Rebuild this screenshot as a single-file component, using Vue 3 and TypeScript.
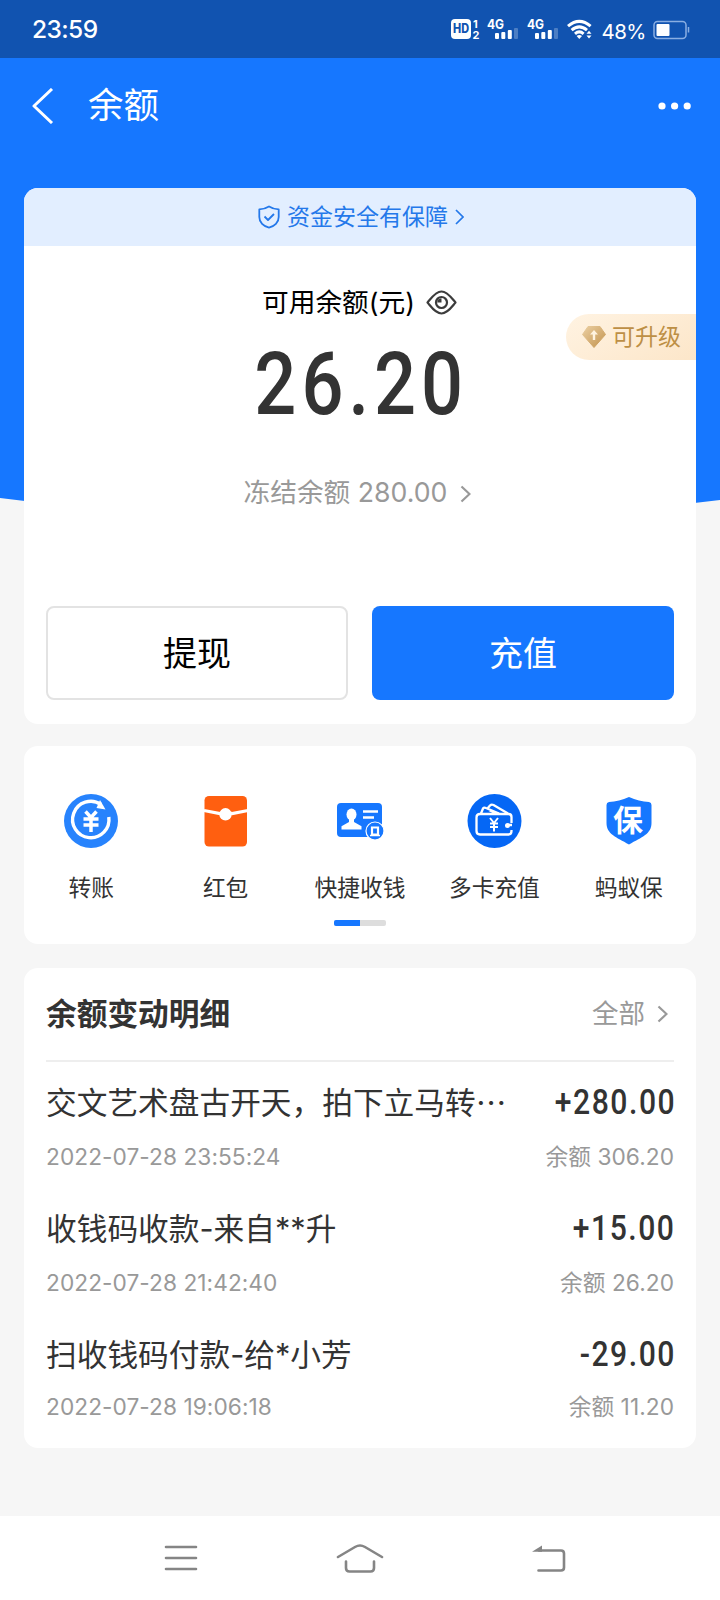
<script setup lang="ts">
interface Shortcut {
  id: string
  label: string
}

interface Transaction {
  title: string
  truncated: boolean
  time: string
  amount: string
  balance: string
}

const shortcuts: Shortcut[] = [
  { id: 'transfer', label: '转账' },
  { id: 'packet', label: '红包' },
  { id: 'collect', label: '快捷收钱' },
  { id: 'cards', label: '多卡充值' },
  { id: 'insure', label: '蚂蚁保' },
]

const transactions: Transaction[] = [
  { title: '交文艺术盘古开天，拍下立马转', truncated: true, time: '2022-07-28 23:55:24', amount: '+280.00', balance: '306.20' },
  { title: '收钱码收款-来自**升', truncated: false, time: '2022-07-28 21:42:40', amount: '+15.00', balance: '26.20' },
  { title: '扫收钱码付款-给*小芳', truncated: false, time: '2022-07-28 19:06:18', amount: '-29.00', balance: '11.20' },
]
</script>

<template>
  <div class="page">
    <svg class="backdrop" width="720" height="510" viewBox="0 0 720 510">
      <path d="M0 0H720V500Q360 545 0 498Z" fill="#1677ff" />
    </svg>

    <div class="status">
      <span class="clock">23:59</span>
      <div class="indicators">
        <svg width="142" height="24" viewBox="452 17 142 24">
          <rect x="452" y="19" width="20" height="20" rx="4" fill="#fff" />
          <text x="462" y="33.4" class="hd" textLength="16" lengthAdjust="spacingAndGlyphs">HD</text>
          <text x="474" y="27.500" class="sim">1</text>
          <text x="473.5" y="39" class="sim">2</text>
          <g v-for="dx in [0, 40]" :key="dx" :transform="`translate(${dx} 0)`" fill="#fff">
            <text x="488" y="28.8" class="net" textLength="17" lengthAdjust="spacingAndGlyphs">4G</text>
            <rect x="496" y="33" width="4" height="6" rx="1" />
            <rect x="502.3" y="32" width="4" height="7" rx="1" />
            <rect x="508.8" y="30" width="4" height="9" rx="1" />
            <rect x="515" y="28" width="4" height="11" rx="1" opacity=".25" />
          </g>
          <g fill="none" stroke="#fff" stroke-width="3">
            <path d="M569 26.2Q580.3 16.500 591.600 26.200" />
            <path d="M572.600 30.200Q580.300 23.500 588 30.200" />
            <path d="M576 33.800Q580.300 30 584.600 33.800" />
          </g>
          <path d="M577.600 36L580.300 39L583 36Q580.300 34 577.600 36Z" fill="#fff" />
          <path d="M587.500 33.800L590 30.800L592.500 33.800ZM587.500 35.600H592.500L590 38.600Z" fill="#fff" />
        </svg>
        <span class="percent">48%</span>
        <svg class="battery" width="37" height="20" viewBox="0 0 37 20">
          <rect x="1" y="1.500" width="32" height="17" rx="3.500" fill="none" stroke="#8aaee2" stroke-width="1.500" />
          <rect x="3.500" y="4" width="13" height="12" rx="1" fill="#fff" />
          <path d="M35.500 7V12.500" stroke="#8aaee2" stroke-width="1.500" />
        </svg>
      </div>
    </div>

    <header class="topbar">
      <svg width="22" height="36" viewBox="0 0 22 36"><path d="M20 1L2 18L20 35" fill="none" stroke="#fff" stroke-width="3" stroke-linejoin="round" /></svg>
      <h1>余额</h1>
      <svg width="34" height="8" viewBox="0 0 34 8" fill="#fff"><circle cx="4" cy="4" r="3.600" /><circle cx="16.600" cy="4" r="3.600" /><circle cx="29.200" cy="4" r="3.600" /></svg>
    </header>

    <section class="card balance">
      <div class="secure">
        <svg width="22" height="24" viewBox="0 0 22 24" fill="none" stroke="#2478ea" stroke-width="1.800" stroke-linejoin="round">
          <path d="M11 1.500Q15.500 4.300 20.700 4.400V12C20.700 17.500 16.500 21.500 11 22.600C5.500 21.500 1.300 17.500 1.300 12V4.400Q6.500 4.300 11 1.500Z" />
          <path d="M6.500 11.500L10 15L16 9" />
        </svg>
        <span>资金安全有保障</span>
        <svg width="9" height="16" viewBox="0 0 9 16"><path d="M1 1L8 8L1 15" fill="none" stroke="#2478ea" stroke-width="1.700" /></svg>
      </div>
      <div class="available">
        <span>可用余额(元)</span>
        <svg width="31" height="25" viewBox="0 0 31 25" fill="none" stroke="#3c3c3c" stroke-width="2.200">
          <path d="M1.500 12.500C5 8.500 9.500 1.500 15.500 1.500S26 8.500 29.500 12.500C26 16.500 21.500 23.500 15.500 23.500S5 16.500 1.500 12.500Z" stroke-linejoin="round" />
          <circle cx="15.500" cy="12.500" r="5.500" />
          <path d="M15.500 8.200V12.500H11.200A4.300 4.300 0 0 1 15.500 8.200Z" fill="#3c3c3c" stroke="none" />
        </svg>
      </div>
      <div class="figure"><span>26.20</span></div>
      <div class="frozen">
        <span>冻结余额 <b>280.00</b></span>
        <svg width="11" height="18" viewBox="0 0 11 18"><path d="M1.500 1.500L9.500 9L1.500 16.500" fill="none" stroke="#999" stroke-width="2.200" /></svg>
      </div>
      <div class="actions">
        <button class="ghost">提现</button>
        <button class="solid">充值</button>
      </div>
      <div class="upgrade">
        <svg width="24" height="22" viewBox="0 0 24 22">
          <defs>
            <linearGradient id="gem" x1="0" y1="0" x2="1" y2="1">
              <stop offset="0" stop-color="#ebcfa2" /><stop offset="1" stop-color="#c2924c" />
            </linearGradient>
          </defs>
          <path d="M6 .5H18L23.500 8.500L12 21.500L.5 8.500Z" fill="url(#gem)" stroke="url(#gem)" stroke-linejoin="round" />
          <path d="M12 4L16 8.500H13.200V14H10.800V8.500H8Z" fill="#fff3df" />
        </svg>
        <span>可升级</span>
      </div>
    </section>

    <section class="card shortcuts">
      <div class="tiles">
        <div v-for="item in shortcuts" :key="item.id" class="tile">
          <svg width="56" height="56" viewBox="0 0 56 56">
            <g v-if="item.id === 'transfer'">
              <circle cx="28" cy="28" r="27" fill="#2783fd" />
              <path d="M38 11.500A18.200 18.200 0 1 0 45.800 24" fill="none" stroke="#fff" stroke-width="3.400" />
              <path d="M37 7L42.500 16.500L33.500 15Z" fill="#fff" />
              <path d="M22.500 18.500L28 24.500L33.500 18.500M28 24V39M20.500 26H35.500M20.500 32H35.500" fill="none" stroke="#fff" stroke-width="3.500" />
            </g>
            <g v-else-if="item.id === 'packet'">
              <rect x="6.500" y="3" width="42.500" height="50.500" rx="4.500" fill="#ff5f10" />
              <path d="M6 17.500L22 20.500H34L50 17.500" fill="none" stroke="#fff" stroke-width="3.300" />
              <circle cx="27.500" cy="21.300" r="6.200" fill="#fff" />
            </g>
            <g v-else-if="item.id === 'collect'">
              <rect x="5" y="10" width="45" height="34" rx="4" fill="#1677ff" />
              <ellipse cx="19.500" cy="21.500" rx="5" ry="6" fill="#fff" />
              <path d="M17 26H22V29L29.500 33.200V36.500H9.500V33.200L17 29Z" fill="#fff" />
              <path d="M31 18.500H46M31 24.500H42" stroke="#fff" stroke-width="2.600" />
              <circle cx="43" cy="38" r="9" fill="#1677ff" stroke="#fff" stroke-width="1.200" />
              <path d="M40 34.500H46V41.500H40Z" fill="none" stroke="#fff" stroke-width="2.200" />
              <path d="M38 42.500H48" stroke="#fff" stroke-width="1.500" />
            </g>
            <g v-else-if="item.id === 'cards'">
              <circle cx="28.500" cy="28" r="27" fill="#0567f5" />
              <g fill="none" stroke="#fff" stroke-width="2.300" stroke-linejoin="round">
                <path d="M45.500 30V24Q45.500 21 42.500 21H14Q10.500 21 10.500 24.500V38Q10.500 41.500 14 41.500H42.500Q45.500 41.500 45.500 38V37" />
                <path d="M15 20.500L17 15.500Q18 14 20 15L33 20.500M21.500 15.500L24 12.500Q25.500 11 27.500 12L42 20.500M23 17L30 20.500" />
                <path d="M24 25L28 30L32 25M28 30V38.500M24 30.500H32M24 34H32" stroke-width="2" />
                <path d="M46 32H42" />
              </g>
              <circle cx="41.500" cy="32.500" r="2.500" fill="#fff" />
            </g>
            <g v-else>
              <path d="M28 4Q38 8.500 48 9Q50.500 9.500 50.500 12V30C50.500 41 41 44 28 51.500C15 44 5.500 41 5.500 30V12Q5.500 9.500 8 9Q18 8.500 28 4Z" fill="#1677ff" />
              <text x="27" y="37.500" class="insure">保</text>
            </g>
          </svg>
          <span>{{ item.label }}</span>
        </div>
      </div>
      <div class="pager"><i></i></div>
    </section>

    <section class="card details">
      <div class="heading">
        <h2>余额变动明细</h2>
        <span class="all">全部</span>
        <svg width="11" height="18" viewBox="0 0 11 18"><path d="M1.500 1.500L9.500 9L1.500 16.500" fill="none" stroke="#999" stroke-width="2.200" /></svg>
      </div>
      <div v-for="row in transactions" :key="row.time" class="row">
        <div class="line main">
          <span class="name">{{ row.title }}<span v-if="row.truncated" class="dots">…</span></span>
          <span class="amount">{{ row.amount }}</span>
        </div>
        <div class="line sub">
          <span>{{ row.time }}</span>
          <span class="left">余额 <b>{{ row.balance }}</b></span>
        </div>
      </div>
    </section>

    <nav class="system">
      <svg width="34" height="26" viewBox="0 0 34 26"><path d="M2 2H32M2 13H32M2 24H32" stroke="#858585" stroke-width="2.600" stroke-linecap="round" /></svg>
      <svg width="48" height="30" viewBox="0 0 48 30" fill="none" stroke="#858585" stroke-width="2.600" stroke-linecap="round">
        <path d="M2 14L19 4Q24 1 29 4L46 14" /><path d="M10 18.500V25Q10 28.500 13.500 28.500H34.500Q38 28.500 38 25V18.500" />
      </svg>
      <svg width="34" height="28" viewBox="0 0 34 28"><path d="M7 6.500H29Q32 6.500 32 9.500V23.500Q32 26.500 29 26.500H6.500" fill="none" stroke="#858585" stroke-width="2.600" stroke-linecap="round" /><path d="M0 7.800L10 1.500V7.800Z" fill="#858585" /></svg>
    </nav>
  </div>
</template>

<style>
body {
  margin: 0;
  background: #f6f6f6;
}
</style>

<style scoped>
.page {
  position: relative;
  width: 720px;
  height: 1600px;
  overflow: hidden;
  display: flex;
  flex-direction: column;
  box-sizing: border-box;
  background: #f6f6f6;
  font-family: Inter, "Noto Sans CJK SC", sans-serif;
  color: #333;
}
.page > * {
  flex-shrink: 0;
}
.backdrop {
  position: absolute;
  left: 0;
  top: 0;
}
.status {
  position: relative;
  display: flex;
  justify-content: space-between;
  align-items: center;
  height: 58px;
  padding: 0 30px 0 32px;
  box-sizing: border-box;
  background: #1153b0;
  color: #fff;
}
.clock {
  font-size: 24.5px;
  font-weight: 500;
  letter-spacing: -0.6px;
}
.indicators {
  display: flex;
  align-items: center;
}
.hd {
  font: 800 12.500px Inter, sans-serif;
  text-anchor: middle;
  fill: #1153b0;
}
.sim {
  font: 700 11px Inter, sans-serif;
  fill: #fff;
}
.net {
  font: 700 13.500px Inter, sans-serif;
}
.percent {
  margin: 5px 7px 0 8px;
  font-size: 20.500px;
  letter-spacing: -0.5px;
}
.battery {
  margin-top: 2px;
}
.topbar {
  position: relative;
  display: flex;
  align-items: center;
  height: 96px;
  padding: 0 28px 0 32px;
  color: #fff;
}
.topbar h1 {
  margin: 0 auto 0 34px;
  font-size: 35.500px;
  font-weight: 400;
  line-height: 50px;
}
.card {
  position: relative;
  width: 672px;
  margin: 0 24px;
  box-sizing: border-box;
  border-radius: 14px;
  background: #fff;
  overflow: hidden;
}
.balance {
  height: 536px;
  margin-top: 34px;
}
.secure {
  display: flex;
  align-items: center;
  justify-content: center;
  gap: 7px;
  height: 58px;
  padding-left: 2px;
  background: #e2eeff;
  color: #2478ea;
  font-size: 23px;
}
.secure span,
.upgrade span {
  padding-bottom: 4px;
}
.available {
  display: flex;
  align-items: center;
  justify-content: center;
  gap: 11px;
  height: 40px;
  margin: 36px 1px 0 0;
  font-size: 26.700px;
  color: #000;
}
.available span {
  padding-bottom: 3px;
}
.figure {
  display: flex;
  justify-content: center;
  height: 88px;
  margin: 18px 0 0 3px;
  font: 500 88px/88px Roboto, sans-serif;
}
.figure span {
  letter-spacing: 6px;
  transform: scaleX(0.84);
}
.frozen {
  display: flex;
  align-items: center;
  justify-content: center;
  gap: 13px;
  height: 40px;
  margin: 44px 5px 0 0;
  font-size: 26.700px;
  color: #999;
}
.frozen span {
  padding-bottom: 3px;
}
.frozen b {
  font-weight: 400;
}
.frozen svg {
  margin-top: 3px;
}
.actions {
  display: grid;
  grid-template-columns: 1fr 1fr;
  gap: 24px;
  margin: 94px 22px 0;
}
.actions button {
  height: 94px;
  padding: 0 0 3px;
  border: 0;
  border-radius: 8px;
  font: 400 34px "Noto Sans CJK SC", sans-serif;
}
.actions .ghost {
  border: 2px solid #e3e3e3;
  background: #fff;
  color: #000;
}
.actions .solid {
  background: #1677ff;
  color: #fff;
}
.upgrade {
  position: absolute;
  right: 0;
  top: 126px;
  display: flex;
  align-items: center;
  gap: 6px;
  width: 130px;
  height: 46px;
  padding-left: 16px;
  box-sizing: border-box;
  border-radius: 23px 0 0 23px;
  background: linear-gradient(150deg, #fff3e2, #fce6c9);
  color: #bd8f45;
  font-size: 23px;
}
.shortcuts {
  height: 198px;
  margin-top: 22px;
  padding-top: 47px;
}
.tiles {
  display: grid;
  grid-template-columns: repeat(5, 1fr);
}
.tile {
  display: flex;
  flex-direction: column;
  align-items: center;
  gap: 23px;
  font-size: 22.700px;
  line-height: 32px;
  white-space: nowrap;
}
.insure {
  font: 700 30px "Noto Sans CJK SC", sans-serif;
  text-anchor: middle;
  fill: #fff;
}
.pager {
  width: 52px;
  height: 6px;
  margin: 16px auto 0;
  border-radius: 2px;
  background: #ddd;
  overflow: hidden;
}
.pager i {
  display: block;
  width: 26px;
  height: 6px;
  background: #1677ff;
}
.details {
  height: 480px;
  margin-top: 24px;
  padding: 0 22px;
}
.heading {
  display: flex;
  align-items: center;
  height: 92px;
  border-bottom: 2px solid #eee;
}
.heading h2 {
  margin: 0 auto 0 0;
  padding-bottom: 6px;
  font-size: 30.700px;
  font-weight: 700;
}
.heading svg {
  margin: 0 6px 0 12px;
}
.all {
  padding-bottom: 5px;
  font-size: 26.500px;
  color: #999;
}
.row {
  height: 126px;
  padding-top: 18px;
  box-sizing: border-box;
}
.line {
  display: flex;
  align-items: center;
  justify-content: space-between;
  white-space: nowrap;
}
.main {
  height: 44px;
}
.sub {
  height: 34px;
  margin-top: 15px;
  font-size: 22.700px;
  letter-spacing: 0.05px;
  color: #999;
}
.row:last-child .sub {
  margin-top: 13px;
}
.sub b {
  font-weight: 400;
}
.left {
  padding-bottom: 2px;
}
.name {
  padding-bottom: 3px;
  font-size: 30.700px;
}
.dots {
  font-family: "Noto Sans CJK SC", sans-serif;
}
.amount {
  margin-right: -2px;
  font: 500 35px Roboto, sans-serif;
  letter-spacing: 1.8px;
  transform: scaleX(0.86);
  transform-origin: right;
}
.system {
  display: grid;
  grid-template-columns: repeat(3, 184px);
  justify-content: center;
  align-items: center;
  justify-items: center;
  height: 84px;
  margin-top: auto;
  background: #fff;
}
.system svg:first-child {
  margin-left: 9px;
}
.system svg:last-child {
  margin-left: 10px;
}
</style>
